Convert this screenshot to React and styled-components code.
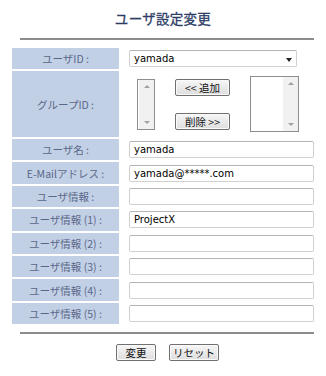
import React from "react";
import styled, { createGlobalStyle } from "styled-components";

const GlobalStyle = createGlobalStyle`
  body {
    margin: 0;
    background: #fff;
    font-family: "Noto Sans CJK JP", "Liberation Sans", sans-serif;
  }
`;

const Page = styled.div`
  width: 326px;
  height: 376px;
  display: flex;
  flex-direction: column;
`;

const Title = styled.h1`
  margin: 0;
  height: 35px;
  display: flex;
  align-items: center;
  justify-content: center;
  font-size: 13.5px;
  font-weight: normal;
  color: #2c3c66;
  letter-spacing: 0.3px;
  -webkit-text-stroke: 0.3px #2c3c66;
`;

const Rule = styled.div`
  height: 2px;
  margin: ${props => props.margin};
  background: #8c8c8c;
`;

const Form = styled.div`
  display: grid;
  grid-template-columns: 107px 1fr;
  column-gap: 2px;
  row-gap: 2px;
  margin: 8px 10px 0 12px;
`;

const Label = styled.div`
  height: ${props => props.h}px;
  background: #c2d0e6;
  color: #5b6888;
  font-size: 10.5px;
  display: flex;
  align-items: center;
  justify-content: center;
`;

const Value = styled.div`
  height: ${props => props.h}px;
  display: flex;
  align-items: center;
  padding-left: 8px;
`;

const TextInput = styled.div`
  box-sizing: border-box;
  width: 185px;
  height: 17px;
  border: 1px solid #d0d0d0;
  border-top-color: #b4b4b4;
  border-radius: 2px;
  background: #fff;
  font-family: "DejaVu Sans", sans-serif;
  font-size: 10px;
  color: #000;
  padding-left: 4px;
  display: flex;
  align-items: center;
`;

const Select = styled(TextInput)`
  width: 168px;
  justify-content: space-between;
  padding-right: 4px;
`;

const Caret = styled.span`
  width: 0;
  height: 0;
  border-left: 3.5px solid transparent;
  border-right: 3.5px solid transparent;
  border-top: 4px solid #222;
  margin-top: 2px;
`;

const GroupBox = styled.div`
  display: flex;
  align-items: center;
  width: 100%;
  padding-left: 8px;
`;

const ListBox = styled.div`
  box-sizing: border-box;
  width: ${props => props.w}px;
  height: ${props => props.h}px;
  border: 1px solid #8e8e8e;
  background: #fff;
  display: flex;
  justify-content: flex-end;
`;

const ScrollBar = styled.div`
  width: 15px;
  background: #f1f1f1;
  display: flex;
  flex-direction: column;
  justify-content: space-between;
  align-items: center;
  padding: 5px 0;
`;

const Arrow = styled.span`
  width: 0;
  height: 0;
  border-left: 3px solid transparent;
  border-right: 3px solid transparent;
  ${props =>
    props.up
      ? "border-bottom: 3px solid #a0a0a0;"
      : "border-top: 3px solid #a0a0a0;"}
`;

const ButtonCol = styled.div`
  display: flex;
  flex-direction: column;
  gap: 17px;
  margin: 0 20px;
`;

const Button = styled.button`
  box-sizing: border-box;
  width: ${props => props.w}px;
  height: 17px;
  padding: 0;
  border: 1px solid #707070;
  border-radius: 2px;
  background: linear-gradient(#f6f6f6, #dedede);
  box-shadow: inset 0 0 0 1px #fafafa;
  font-family: "Noto Sans CJK JP", sans-serif;
  font-size: 10.5px;
  color: #111;
  display: flex;
  align-items: center;
  justify-content: center;
`;

const Footer = styled.div`
  display: flex;
  justify-content: center;
  gap: 13px;
  margin-top: 10px;
  padding-left: 9px;
`;

function Scroll() {
  return (
    <ScrollBar>
      <Arrow up />
      <Arrow />
    </ScrollBar>
  );
}

const textRows = [
  ["ユーザ名 :", "yamada"],
  ["E-Mailアドレス :", "yamada@*****.com"],
  ["ユーザ情報 :", ""],
  ["ユーザ情報 (1) :", "ProjectX"],
  ["ユーザ情報 (2) :", ""],
  ["ユーザ情報 (3) :", ""],
  ["ユーザ情報 (4) :", ""],
  ["ユーザ情報 (5) :", ""]
];

export default function App() {
  return (
    <Page>
      <GlobalStyle />
      <Title>ユーザ設定変更</Title>
      <Rule margin="3px 12px 0 20px" />
      <Form>
        <Label h={21}>ユーザID :</Label>
        <Value h={21}>
          <Select>
            yamada
            <Caret />
          </Select>
        </Value>
        <Label h={66}>グループID :</Label>
        <Value h={66}>
          <GroupBox>
            <ListBox w={18} h={51}>
              <Scroll />
            </ListBox>
            <ButtonCol>
              <Button w={55}>&lt;&lt; 追加</Button>
              <Button w={55}>削除 &gt;&gt;</Button>
            </ButtonCol>
            <ListBox w={49} h={56}>
              <Scroll />
            </ListBox>
          </GroupBox>
        </Value>
        {textRows.map(([label, value]) => (
          <React.Fragment key={label}>
            <Label h={21.4}>{label}</Label>
            <Value h={21.4}>
              <TextInput>{value}</TextInput>
            </Value>
          </React.Fragment>
        ))}
      </Form>
      <Rule margin="8px 12px 0 20px" />
      <Footer>
        <Button w={40}>変更</Button>
        <Button w={50}>リセット</Button>
      </Footer>
    </Page>
  );
}
